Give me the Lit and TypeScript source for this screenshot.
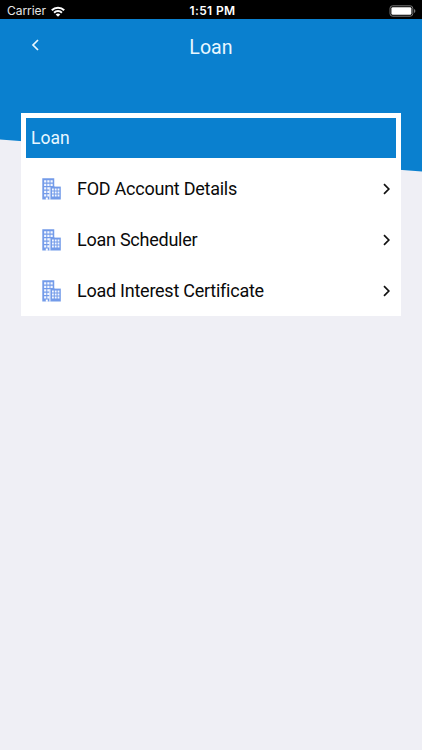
import { LitElement, html, svg, css } from "lit";
import { customElement } from "lit/decorators.js";

const cells = (x0: number, y0: number, cols: number, rows: number, w: number, h: number, dx: number, dy: number) => {
  let d = "";
  for (let r = 0; r < rows; r++)
    for (let c = 0; c < cols; c++) d += `M${x0 + c * dx} ${y0 + r * dy}h${w}v${h}h${-w}z`;
  return d;
};

const building = svg`
  <path fill="#739be9" d="M0.3 0.3h12.2v8.2h6.3v13h-18.5z"/>
  <path fill="#fff" d="M12.5 0h6.5v8.2h-6.5z"/>
  <path fill="#f3f7ff" d="${cells(2.1, 2.3, 3, 2, 2.2, 2.3, 3.2, 3.5)}"/>
  <path fill="#f3f7ff" d="${cells(2.1, 9.3, 2, 3, 2.2, 2.3, 3.2, 3.5)}"/>
  <path fill="#fff" d="M7.4 9.2h1v12.6h-1zM3.8 19.4h2v2.4h-2z"/>
  <path fill="#f3f7ff" d="${cells(10, 10.6, 3, 3, 1.8, 2, 2.8, 3)}"/>`;

@customElement("app-root")
export class AppRoot extends LitElement {
  static styles = css`
    :host { display: block; height: 100vh; background: #efeff5; font-family: Roboto, sans-serif; overflow: hidden; }
    * { box-sizing: border-box; }
    svg { display: block; }
    .status { display: grid; grid-template-columns: 1fr auto 1fr; align-items: center; height: 19px; padding: 3px 6px 0 7px;
      background: #000; color: #fff; font: 12px/16px Inter, sans-serif; }
    .carrier { display: flex; align-items: center; gap: 5px; color: #e6e6e6; letter-spacing: -0.05px; }
    .time { font-weight: 600; letter-spacing: 0.35px; padding-left: 2px; }
    .battery { justify-self: end; }
    .page { display: grid; }
    .backdrop { grid-area: 1 / 1; height: 152.5px; background: #0a80cf; clip-path: polygon(0 0, 100% 0, 100% 100%, 0 120.5px); }
    .content { grid-area: 1 / 1; z-index: 1; }
    .bar { display: grid; grid-template-columns: 70px 1fr 70px; align-items: center; height: 56px; color: #e8f7ff; }
    .back { margin: -4px 0 0 30px; }
    .title { padding-top: 2px; text-align: center; font-size: 19.6px; line-height: 24px; letter-spacing: 0.05px; }
    .card { margin: 37.5px 21px 0; padding: 5px 5px 0; height: 203.5px; background: #fff; }
    .heading { height: 40.5px; padding: 1px 5px 0; display: flex; align-items: center; background: #0a80cf; color: #e8f7ff;
      font-size: 17.5px; letter-spacing: 0; }
    .rows { padding-top: 5.5px; }
    .row { height: 51px; display: flex; align-items: center; padding: 0 4px 0 16px; color: #0a0a0a; font-size: 18px; }
    .label { flex: 1; padding-left: 16px; line-height: 24px; letter-spacing: -0.25px; }
  `;

  render() {
    return html`
      <div class="status">
        <div class="carrier">
          <span>Carrier</span>
          <svg width="14" height="11" viewBox="0 0 14 11" fill="none" stroke="#fff" stroke-width="2">
            <path d="M0.8 4.2a8.8 8.8 0 0 1 12.4 0M3.1 6.7a5.5 5.5 0 0 1 7.8 0"/>
            <path fill="#fff" stroke="none" d="M7 10.8L4.7 8.5a3.3 3.3 0 0 1 4.6 0z"/>
          </svg>
        </div>
        <span class="time">1:51 PM</span>
        <svg class="battery" width="27" height="12" viewBox="0 0 27 12">
          <rect x="1" y="0.8" width="22.8" height="10.4" rx="2.6" fill="none" stroke="#777" stroke-width="1"/>
          <rect x="2.4" y="2.2" width="20" height="7.6" rx="1.4" fill="#fff"/>
          <path d="M25 4v4q1.4-.6 1.4-2t-1.4-2z" fill="#777"/>
        </svg>
      </div>
      <div class="page">
        <div class="backdrop"></div>
        <div class="content">
          <div class="bar">
            <svg class="back" width="10" height="12" viewBox="0 0 10 12" fill="none" stroke="#e8f7ff" stroke-width="1.7">
              <path d="M8 1L3 6l5 5"/>
            </svg>
            <span class="title">Loan</span>
          </div>
          <div class="card">
            <div class="heading">Loan</div>
            <div class="rows">
              ${["FOD Account Details", "Loan Scheduler", "Load Interest Certificate"].map(
                (label) => html`<div class="row">
                  <svg width="19" height="22" viewBox="0 0 19 22">${building}</svg>
                  <span class="label">${label}</span>
                  <svg width="12" height="12" viewBox="0 0 12 12" fill="none" stroke="#111" stroke-width="1.7">
                    <path d="M4 1.2L8.8 6L4 10.8"/>
                  </svg>
                </div>`
              )}
            </div>
          </div>
        </div>
      </div>`;
  }
}
